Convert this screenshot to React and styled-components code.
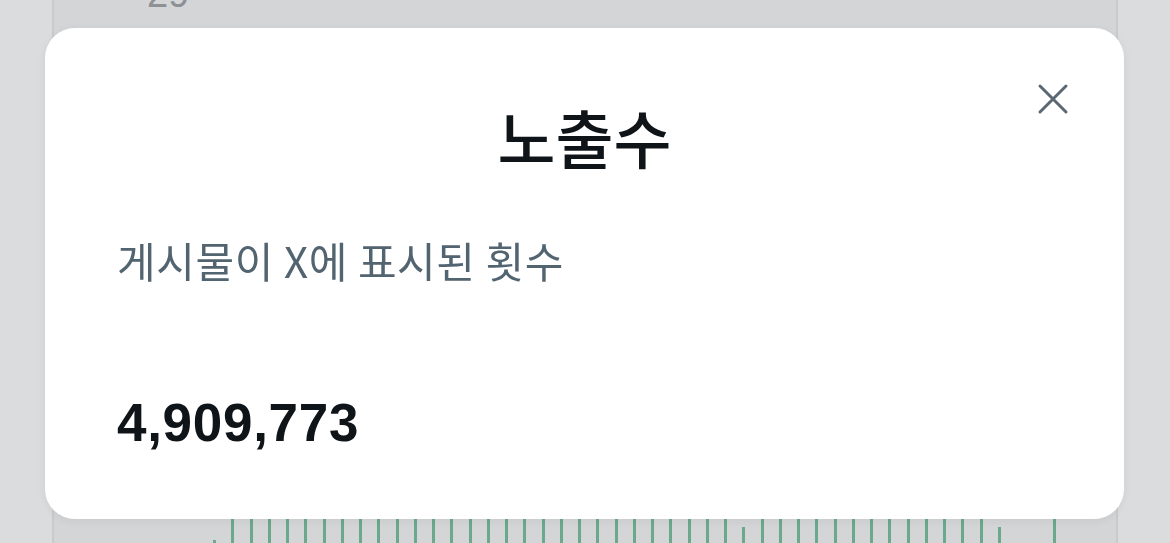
import React from 'react';
import styled, { createGlobalStyle } from 'styled-components';

const GlobalStyle = createGlobalStyle`
  html, body {
    margin: 0;
    padding: 0;
    background: #dbdcde;
    overflow: hidden;
  }
  * {
    box-sizing: border-box;
  }
`;

const Page = styled.div`
  width: 1170px;
  height: 543px;
  padding: 0 52px;
  display: flex;
`;

const Panel = styled.div`
  flex: 1;
  display: flex;
  flex-direction: column;
  background: #d4d5d7;
  border-left: 2px solid #c9cacc;
  border-right: 2px solid #c9cacc;
  overflow: hidden;
`;

const PeekLabel = styled.div`
  margin: -26px 0 0 93px;
  font-family: 'Liberation Sans', Arial, sans-serif;
  font-size: 38px;
  line-height: 40px;
  color: #8d9094;
`;

const Chart = styled.div`
  margin-top: auto;
  height: 80px;
  display: flex;
  align-items: flex-end;
  gap: 15.25px;
  padding-left: 159px;
`;

const Bar = styled.div`
  width: 3px;
  height: ${(props) => props.h}px;
  background: #6aa98d;
  flex-shrink: 0;
`;

const Overlay = styled.div`
  position: fixed;
  inset: 0;
  padding: 28px 46px 24px 45px;
  display: flex;
`;

const Modal = styled.div`
  position: relative;
  flex: 1;
  background: #ffffff;
  border-radius: 30px;
  box-shadow: 0 2px 10px rgba(0, 0, 0, 0.06);
  padding: 70px 72px 0 72px;
  display: flex;
  flex-direction: column;
`;

const CloseButton = styled.button`
  position: absolute;
  top: 52px;
  right: 52px;
  width: 38px;
  height: 38px;
  padding: 0;
  border: none;
  background: transparent;
  display: flex;
  align-items: center;
  justify-content: center;
  cursor: pointer;
`;

const Title = styled.h1`
  margin: 0;
  text-align: center;
  font-family: 'Noto Sans CJK KR', 'Noto Sans', sans-serif;
  font-weight: 500;
  font-size: 63px;
  line-height: 76px;
  color: #0f1419;
`;

const Description = styled.p`
  margin: 60px 0 0 0;
  font-family: 'Noto Sans CJK KR', 'Noto Sans', sans-serif;
  font-weight: 400;
  font-size: 42px;
  line-height: 52px;
  letter-spacing: 0.6px;
  color: #536471;
`;

const Count = styled.div`
  margin-top: 107px;
  font-family: 'Liberation Sans', Arial, sans-serif;
  font-weight: 700;
  font-size: 53px;
  line-height: 60px;
  letter-spacing: 0.7px;
  color: #0f1419;
`;

// heights per bar, starting at the short one on the left
const bars = Array.from({ length: 47 }, (_, i) => {
  if (i === 0) return 3;
  if (i === 29 || i === 43) return 16;
  if (i === 44 || i === 45) return 0;
  return 60;
});

function CloseIcon() {
  return (
    <svg width="32" height="32" viewBox="0 0 32 32" fill="none">
      <path d="M3 3L29 29M29 3L3 29" stroke="#5b6772" strokeWidth="3" strokeLinecap="round" />
    </svg>
  );
}

export default function App() {
  return (
    <>
      <GlobalStyle />
      <Page>
        <Panel>
          <PeekLabel>29</PeekLabel>
          <Chart>
            {bars.map((h, i) => (
              <Bar key={i} h={h} />
            ))}
          </Chart>
        </Panel>
      </Page>
      <Overlay>
        <Modal>
          <CloseButton aria-label="닫기">
            <CloseIcon />
          </CloseButton>
          <Title>노출수</Title>
          <Description>게시물이 X에 표시된 횟수</Description>
          <Count>4,909,773</Count>
        </Modal>
      </Overlay>
    </>
  );
}
